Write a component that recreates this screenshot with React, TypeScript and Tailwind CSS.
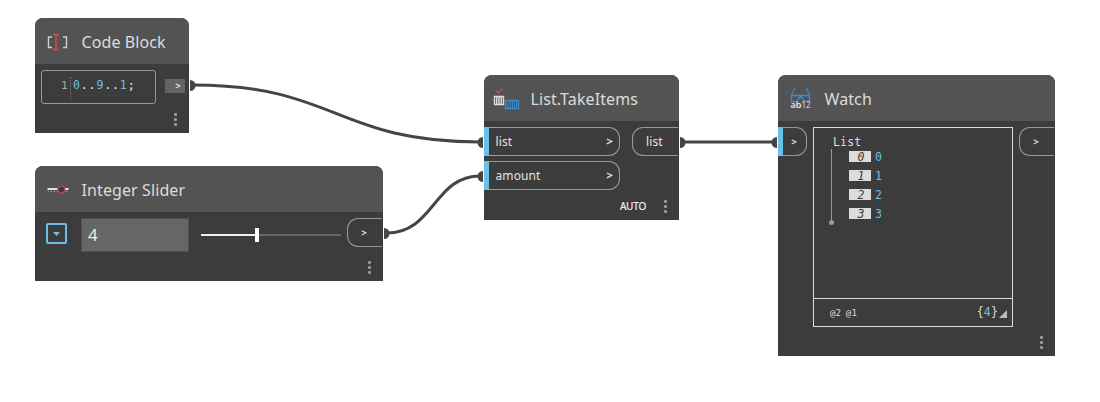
import type { ReactNode } from 'react';

const SANS = "font-['Noto_Sans',sans-serif]";
const MONO = "font-['DejaVu_Sans_Mono',monospace]";

function Menu({ className = '' }: { className?: string }) {
  return (
    <div className={`flex w-[3px] flex-col gap-[2px] ${className}`}>
      <i className="size-[3px] rounded-[1px] bg-[#999]" />
      <i className="size-[3px] rounded-[1px] bg-[#999]" />
      <i className="size-[3px] rounded-[1px] bg-[#999]" />
    </div>
  );
}

function Node({ place, title, icon, children }: { place: string; title: string; icon: ReactNode; children: ReactNode }) {
  return (
    <section className={`absolute flex flex-col overflow-hidden rounded-t-lg bg-[#3c3c3c] ${place}`}>
      <header className="flex h-[46px] shrink-0 items-center bg-[#535353] pl-[11px]">
        <div className="w-[35px] shrink-0">{icon}</div>
        <h2 className="mt-[2px] whitespace-nowrap pl-[0.5px] text-[16px] leading-6 tracking-[0.1px] text-[#dcdcdc]">{title}</h2>
      </header>
      {children}
    </section>
  );
}

function Chevron({ small = false, className = '' }: { small?: boolean; className?: string }) {
  return (
    <svg
      width={small ? 6 : 7}
      height={small ? 6 : 7}
      viewBox="0 0 7 7"
      fill="none"
      stroke="#dcdcdc"
      strokeWidth="1.3"
      className={className}
    >
      <path d="M.8 1 5.8 3.400.8 5.800" />
    </svg>
  );
}

function InPort({ label, width }: { label?: string; width: string }) {
  return (
    <div className={`flex h-[29px] items-stretch ${width}`}>
      <div className="w-[5px] shrink-0 bg-[#6ac0e7]" />
      <div className="flex grow items-center justify-between rounded-r-[11px] border border-l-0 border-[#999] pl-[6.5px] pr-[6px] text-[12px] text-[#e4e4e4]">
        {label && <span className="leading-4 tracking-[0.1px]">{label}</span>}
        <Chevron small={!label} className={label ? '' : 'ml-px'} />
      </div>
    </div>
  );
}

function OutPort({ label, width }: { label?: string; width: string }) {
  return (
    <div className={`mr-px flex h-[29px] items-center rounded-l-[11px] border border-r-0 border-[#999] pl-[13px] text-[12px] leading-4 text-[#e4e4e4] ${width}`}>
      {label ? <span className="tracking-[0.1px]">{label}</span> : <Chevron small />}
    </div>
  );
}

const codeIcon = (
  <svg width="24" height="24" viewBox="0 0 24 24" fill="none">
    <path d="M6 8H2.500V18.500H6M17 8H20.500V18.500H17" stroke="#d0d0d0" strokeWidth="1.4" />
    <path d="M7 5.500h6M7 20.500h6M10 5.500v15" stroke="#ca4949" strokeWidth="1.8" />
  </svg>
);

const sliderIcon = (
  <svg width="24" height="24" viewBox="0 0 24 24" fill="none">
    <path d="M1.500 12h21" stroke="#e2e2e2" strokeWidth="2" />
    <path d="M2 14.500h20" stroke="#aaa" strokeWidth="1" strokeDasharray="1 2" />
    <circle cx="15.300" cy="12.400" r="3.400" fill="#3c3c3c" stroke="#a84b4b" strokeWidth="1.400" />
  </svg>
);

const listIcon = (
  <svg width="28" height="26" viewBox="0 0 28 26" fill="none" className="overflow-visible">
    <path d="M1 5.500 3.300 7.800 7.500 3.500" stroke="#b85452" strokeWidth="1.700" />
    <path d="M-1 11.500H9M-1 19.500H9M-.5 11v9M1.750 11v9M4 11v9M6.250 11v9M8.500 11v9" stroke="#dedede" strokeWidth="1.400" />
    <path d="M10 15.500h14M10 23.500h14M10.500 15v9M23.500 15v9" stroke="#398bd5" strokeWidth="1.400" />
    <path d="M13 15v9M15.200 15v9M17.500 15v9M19.700 15v9M21.700 15v9" stroke="#398bd5" strokeWidth="0.900" />
  </svg>
);

const watchIcon = (
  <svg width="24" height="26" viewBox="0 0 24 26" fill="none">
    <path d="M7 2.500C4.500 3 4.500 6 2.800 10M16 2.500c2.500.5 2.500 3.500 4.200 7.500" stroke="#4b82b5" strokeWidth="1.200" />
    <path d="M2 10.500h19M2.500 10v6.500h5L10.800 12h1.400l3.300 4.500h5V10" stroke="#398bd5" strokeWidth="1.400" />
    <text x="1.500" y="23" fill="#e8e8e8" fontSize="9.500" fontWeight="600" fontFamily="Noto Sans" textLength="11" lengthAdjust="spacingAndGlyphs" stroke="#535353" strokeWidth="1.500" paintOrder="stroke">ab</text>
    <text x="12.500" y="23" fill="#dcdcdc" fontSize="8" fontFamily="Noto Sans" textLength="9" lengthAdjust="spacingAndGlyphs">12</text>
  </svg>
);

function Wires() {
  return (
    <svg className="absolute inset-0" width="1100" height="402" fill="none">
      <g stroke="#454545" strokeWidth="3">
        <path d="M193 85C336 85 336 142 480 142" />
        <path d="M387 233C434 233 434 176 480 176" />
        <path d="M683 142H774" />
      </g>
      <g fill="#454545">
        <path d="M190 80a5 5 0 0 1 0 11z" />
        <path d="M384 228a5 5 0 0 1 0 11z" />
        <path d="M680 137a5 5 0 0 1 0 11z" />
        <path d="M483 137a5 5 0 0 0 0 11z" />
        <path d="M483 171a5 5 0 0 0 0 11z" />
        <path d="M777 137a5 5 0 0 0 0 11z" />
      </g>
    </svg>
  );
}

export default function App() {
  return (
    <main className={`relative h-[402px] w-[1100px] overflow-hidden bg-white ${SANS}`}>
      <Wires />

      <Node place="left-[35px] top-[18px] h-[115px] w-[154px]" title="Code Block" icon={codeIcon}>
        <div className="flex items-start pl-[6px] pt-[6px]">
          <div className={`flex h-[34px] w-[115px] items-start rounded-[3px] border border-[#999] pl-[19px] pt-[6px] leading-[17px] ${MONO}`}>
            <span className="h-[22px] w-[10px] border-r border-dotted border-[#777] text-[11px] leading-[17px] text-[#aaa]">1</span>
            <pre className="ml-[2px] font-[inherit] text-[11.5px] tracking-[0.88px] text-[#eee]"><b className="font-normal text-[#6ac0e7]">0</b>..<b className="font-normal text-[#6ac0e7]">9</b>..<b className="font-normal text-[#6ac0e7]">1</b>;</pre>
          </div>
          <div className="ml-[9px] mt-[9px] flex h-[14px] w-[20px] items-center bg-[#636363] pl-[10px]"><Chevron small /></div>
        </div>
        <Menu className="ml-[139px] mt-[9px]" />
      </Node>

      <Node place="left-[35px] top-[166px] h-[115px] w-[348px]" title="Integer Slider" icon={sliderIcon}>
        <div className="flex items-start pl-[11px] pt-[6px]">
          <div className="mt-[5px] flex size-[21px] items-center justify-center rounded-[2px] border-2 border-[#6ac0e7]">
            <svg width="7" height="4" viewBox="0 0 7 4"><path d="M0 0h7L3.500 4z" fill="#6ac0e7" /></svg>
          </div>
          <div className="ml-[14px] flex h-[34px] w-[108px] items-center border border-[#505050] bg-[#666] pl-[6px] text-[17px] text-[#eee]">4</div>
          <div className="ml-[12px] mt-[10px] flex h-[14px] w-[140px] items-center">
            <div className="h-[2px] w-[54px] bg-[#eee]" />
            <div className="h-[14px] w-[4px] bg-white" />
            <div className="h-[2px] w-[82px] bg-[#666]" />
          </div>
          <div className="ml-[6px]"><OutPort width="w-[35px]" /></div>
        </div>
        <Menu className="ml-[333px] mt-[9px]" />
      </Node>

      <Node place="left-[484px] top-[75px] h-[145px] w-[195px]" title="List.TakeItems" icon={listIcon}>
        <div className="flex items-start justify-between pt-[6px]">
          <div className="flex flex-col gap-[5px]">
            <InPort label="list" width="w-[136px]" />
            <InPort label="amount" width="w-[136px]" />
          </div>
          <OutPort label="list" width="w-[46px]" />
        </div>
        <div className="mt-[9px] flex items-center justify-end pr-[12px] text-[10px] leading-[15px] text-[#eee]">
          <span className="tracking-[-0.2px] [-webkit-text-stroke:0.2px]">AUTO</span>
          <Menu className="ml-[18px]" />
        </div>
      </Node>

      <Node place="left-[778px] top-[75px] h-[281px] w-[277px]" title="Watch" icon={watchIcon}>
        <div className="flex items-start pt-[6px]">
          <InPort width="w-[29px]" />
          <div className={`ml-[6px] flex h-[200px] w-[200px] flex-col border border-[#dcdcdc] text-[11.5px] tracking-[0.15px] text-[#dcdcdc] ${MONO}`}>
            <div className="grow pl-[15px] pt-[7px]">
              <div className="pl-[4px] leading-[14px]">List</div>
              <div className="flex">
                <div className="flex w-[5px] flex-col items-center">
                  <div className="h-[71px] w-px bg-[#999]" />
                  <div className="size-[5px] rounded-full bg-[#999]" />
                </div>
                <div className="ml-[15px] mt-[2px] flex flex-col gap-[8px]">
                  {['0', '1', '2', '3'].map((n) => (
                    <div key={n} className="flex h-[11px] items-center gap-[4px] leading-[11px]">
                      <span className="flex h-[11px] w-[22px] items-center justify-center bg-[#dcdcdc] pl-[2px] pt-px italic text-[#3c3c3c]">{n}</span>
                      <span className="pt-px text-[#6ac0e7]">{n}</span>
                    </div>
                  ))}
                </div>
              </div>
            </div>
            <div className="flex h-[28px] shrink-0 items-center border-t border-[#dcdcdc] pl-[16px] pr-[5px]">
              <span className="mt-[2px] text-[9px] tracking-[0.2px] [word-spacing:-1px]">@2 @1</span>
              <span className="ml-auto">{'{'}<b className="font-normal text-[#6ac0e7]">4</b>{'}'}</span>
              <svg width="8" height="8" viewBox="0 0 8 8" className="ml-px mt-[2px]"><path d="M8 0v8H0z" fill="#bbb" /></svg>
            </div>
          </div>
          <div className="ml-[6px]"><OutPort width="w-[35px]" /></div>
        </div>
        <Menu className="ml-[262px] mt-[9px]" />
      </Node>
    </main>
  );
}
